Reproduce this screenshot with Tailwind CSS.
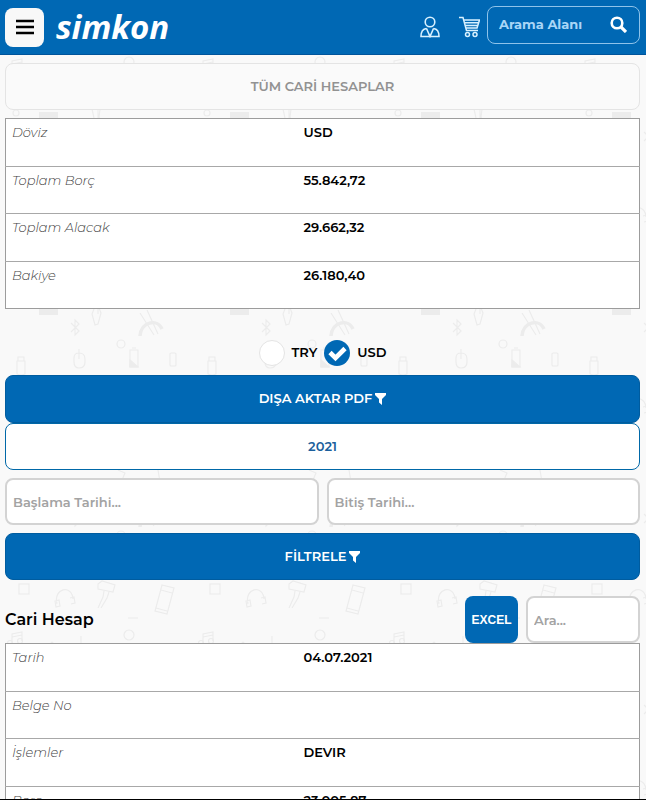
<!DOCTYPE html>
<html lang="tr">
<head>
<meta charset="utf-8">
<meta name="viewport" content="width=device-width, initial-scale=1">
<title>Cari Hesap</title>
<script src="https://cdn.jsdelivr.net/npm/@tailwindcss/browser@4"></script>
</head>
<body class="relative h-screen overflow-hidden bg-[#f9f9f9] font-[Montserrat,Inter,'Open_Sans',sans-serif] text-[13px] font-semibold text-black">

<!-- repeating accessory pattern behind the page -->
<svg class="absolute inset-0 -z-10 h-full w-full" aria-hidden="true">
  <defs>
    <pattern id="gear" width="191" height="191" patternUnits="userSpaceOnUse">
      <g fill="none" stroke="#ececec" stroke-width="1.2">
        <rect x="19" y="11" width="10" height="10"/>
        <path d="M57 31c-4-16 15-20 16-5M55 28l4-1 1 6-4 1zM70 25l4-1 1 6-4 1"/>
        <path d="M98 11l4-3 13 4-2 7-15-3zM104 18l-1 6-5 11M109 19l-2 6-6 10"/>
        <path d="M162 12l12 3-7 26-12-3zM161 17l11 3M156 35l11 3"/>
        <path d="M128 45h10"/>
        <circle cx="129" cy="62" r="5"/>
        <path d="M12 70v-9l10-2v9M12 64l10-2"/><circle cx="10" cy="70" r="2.500"/><circle cx="20" cy="68" r="2.500"/>
        <circle cx="16" cy="113" r="3"/>
        <path d="M81 63v10M48 73l4-4 4 4"/>
        <path d="M118 88l7 3-3 7M158 88l2 12 5 4"/>
        <path d="M92 109l2 9-2 5 3 11 3-1 3-11-2-5 1-8M98 109v14"/>
        <path d="M71 132l8 8-4 4v-15l4 4-8 8"/>
        <path d="M140 145c1-14 17-18 22-7" stroke-width="3.500"/><path d="M140 122l14 22M147 119l11 24"/>
        <circle cx="121" cy="153" r="4"/>
        <path d="M74 167q0-5 5-5 6 0 6 6v3q0 6-6 6-5 0-5-6zM79 158v10"/>
        <path d="M130 159h8v17h-8zM132 157h4"/><path d="M130 169l8 7h-8z" fill="#ececec"/>
        <rect x="170" y="162" width="6" height="13" rx="1"/>
        <path d="M17 170h8v13q-4 2-8 0zM18 170v-4h6v4"/>
      </g>
      <path d="M39 112h19v12H39z" fill="#ececec"/>
    </pattern>
  </defs>
  <rect width="100%" height="100%" fill="url(#gear)"/>
</svg>

<header class="flex h-[55px] items-center border-b border-[#00549b] bg-[#0068b4] pr-[6px] pl-[5px]">
  <button type="button" aria-label="Menü" class="flex size-[39px] items-center justify-center rounded-lg bg-[#f8f8f8]">
    <svg width="18" height="16" viewBox="0 0 18 16" fill="none" stroke="#000" stroke-width="2.500"><path d="M0 2h18M0 8h18M0 14h18"/></svg>
  </button>
  <a href="#" class="ml-3 font-['Open_Sans',sans-serif] text-[33px] leading-10 font-bold text-white italic">simkon</a>
  <a href="#" aria-label="Hesabım" class="ml-auto">
    <svg width="20" height="22" viewBox="0 0 20 22" fill="none" stroke="#d8f1ff" stroke-width="1.600"><circle cx="10" cy="6" r="4.800"/><path d="M6.500 12.500C2.500 13 1 16 1 20.500h18c0-4.500-1.500-7.500-5.500-8M6.500 12.500l3.500 8 3.500-8"/></svg>
  </a>
  <a href="#" aria-label="Sepet" class="mr-[7px] ml-[19px]">
    <svg width="21" height="22" viewBox="0 0 21 22" fill="none" stroke="#d8f1ff" stroke-width="1.500"><path d="M0 1.500h4L7.500 14.500H19M5 4h15.500l-2.500 8H7M5.500 6.700h14M6.200 9.400h13"/><circle cx="8.500" cy="18.500" r="2"/><circle cx="16" cy="18.500" r="2"/></svg>
  </a>
  <form class="mb-[5px] flex h-[38px] w-[153px] items-center rounded-lg border border-[#8fc3ea] pr-3 pl-[11px]">
    <input type="search" aria-label="Arama Alanı" placeholder="Arama Alanı" class="w-full min-w-0 bg-transparent font-bold text-white outline-none placeholder:text-[#a9d6f7]">
    <button type="button" aria-label="Ara" class="shrink-0">
      <svg width="17" height="17" viewBox="0 0 17 17" fill="none" stroke="#fff" stroke-width="2.600"><circle cx="7" cy="7" r="5.300"/><path d="M11 11l5 5" stroke-width="3.200"/></svg>
    </button>
  </form>
</header>

<main class="flex flex-col pt-2 pr-[6px] pl-[5px]">
  <button type="button" class="h-[47px] rounded-lg border border-[#e4e4e4] bg-[#fafafa] text-[#929292]">TÜM CARİ HESAPLAR</button>

  <table class="mt-2 h-[191px] w-full border-collapse border border-[#9c9c9c] bg-white">
    <tbody class="divide-y divide-[#a8a8a8]">
      <tr class="align-top"><th scope="row" class="w-[47%] px-[6px] pt-[3px] text-left leading-5 font-light text-[#444] italic">Döviz</th><td class="pt-[3px] leading-5">USD</td></tr>
      <tr class="align-top"><th scope="row" class="w-[47%] px-[6px] pt-[3px] text-left leading-5 font-light text-[#444] italic">Toplam Borç</th><td class="pt-[3px] leading-5">55.842,72</td></tr>
      <tr class="align-top"><th scope="row" class="w-[47%] px-[6px] pt-[3px] text-left leading-5 font-light text-[#444] italic">Toplam Alacak</th><td class="pt-[3px] leading-5">29.662,32</td></tr>
      <tr class="align-top"><th scope="row" class="w-[47%] px-[6px] pt-[3px] text-left leading-5 font-light text-[#444] italic">Bakiye</th><td class="pt-[3px] leading-5">26.180,40</td></tr>
    </tbody>
  </table>

  <div class="mt-[31px] mb-[9px] flex items-center justify-center gap-[7px]">
    <label class="flex items-center gap-[7px]">
      <input type="radio" name="currency" class="size-[26px] appearance-none rounded-full border border-[#e4e4e4] bg-white">TRY
    </label>
    <label class="flex items-center gap-[7px]">
      <span class="relative flex">
        <input type="radio" name="currency" checked class="size-[26px] appearance-none rounded-full bg-[#0068b4]">
        <svg class="absolute inset-0" width="26" height="26" viewBox="0 0 26 26" fill="none" stroke="#fff" stroke-width="4.600"><path d="M6 12.500l5.500 5.500L21 8.500"/></svg>
      </span>USD
    </label>
  </div>

  <button type="button" class="flex h-12 items-center justify-center gap-[3px] rounded-lg border border-[#005c9f] bg-[#0068b4] text-white">DIŞA AKTAR PDF
    <svg width="11" height="12" viewBox="0 0 11 12" fill="#fff"><path d="M0 0h11v2L7 6v6L4 9.500V6L0 2z"/></svg>
  </button>
  <button type="button" class="h-[47px] rounded-lg border border-[#0068a8] bg-white text-[#1c5f9c]">2021</button>

  <div class="mt-2 grid grid-cols-2 gap-2">
    <input type="text" aria-label="Başlama Tarihi" placeholder="Başlama Tarihi..." class="h-[47px] min-w-0 rounded-lg border-2 border-[#d3d3d3] bg-white px-[6px] placeholder:text-[#a3a3a3]">
    <input type="text" aria-label="Bitiş Tarihi" placeholder="Bitiş Tarihi..." class="h-[47px] min-w-0 rounded-lg border-2 border-[#d3d3d3] bg-white px-[6px] placeholder:text-[#a3a3a3]">
  </div>

  <button type="button" class="mt-2 flex h-[47px] items-center justify-center gap-[3px] rounded-lg border border-[#005c9f] bg-[#0068b4] text-white">FİLTRELE
    <svg width="11" height="12" viewBox="0 0 11 12" fill="#fff"><path d="M0 0h11v2L7 6v6L4 9.500V6L0 2z"/></svg>
  </button>

  <div class="mt-4 flex items-center">
    <h2 class="mr-auto text-[16px]">Cari Hesap</h2>
    <button type="button" class="h-[47px] w-[53px] rounded-lg bg-[#0068b4] font-['Liberation_Sans',sans-serif] text-[12px] font-bold text-white">EXCEL</button>
    <input type="search" aria-label="Ara" placeholder="Ara..." class="ml-2 h-[47px] w-[114px] rounded-lg border-2 border-[#d3d3d3] bg-white px-[6px] placeholder:text-[#a3a3a3]">
  </div>

  <table class="h-[191px] w-full border-collapse border border-[#9c9c9c] bg-white">
    <tbody class="divide-y divide-[#a8a8a8]">
      <tr class="align-top"><th scope="row" class="w-[47%] px-[6px] pt-[3px] text-left leading-5 font-light text-[#444] italic">Tarih</th><td class="pt-[3px] leading-5">04.07.2021</td></tr>
      <tr class="align-top"><th scope="row" class="w-[47%] px-[6px] pt-[3px] text-left leading-5 font-light text-[#444] italic">Belge No</th><td class="pt-[3px] leading-5"></td></tr>
      <tr class="align-top"><th scope="row" class="w-[47%] px-[6px] pt-[3px] text-left leading-5 font-light text-[#444] italic">İşlemler</th><td class="pt-[3px] leading-5">DEVIR</td></tr>
      <tr class="align-top"><th scope="row" class="w-[47%] px-[6px] pt-[3px] text-left leading-5 font-light text-[#444] italic">Borç</th><td class="pt-[3px] leading-5">23.005,87</td></tr>
    </tbody>
  </table>
</main>
<div class="fixed inset-x-0 bottom-0 h-px bg-black"></div>
</body>
</html>
